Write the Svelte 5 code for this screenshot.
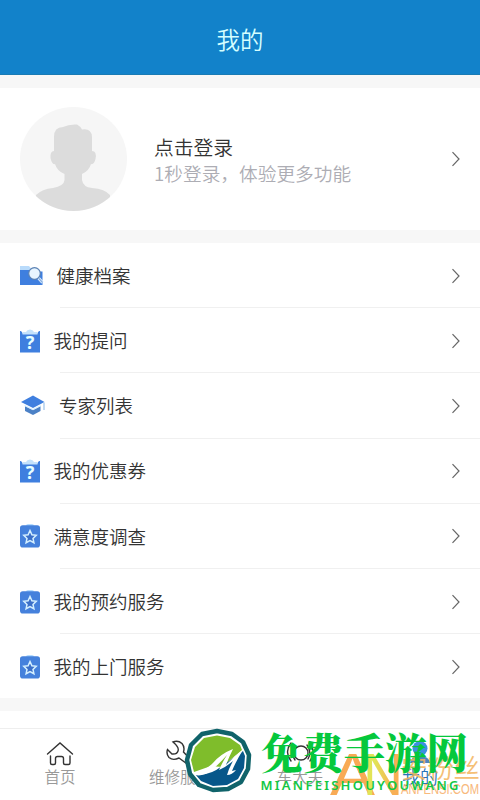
<script lang="ts">
	type Row = { label: string; icon: 'folder' | 'question' | 'cap' | 'star'; width: number; gap: number };

	// Menu entries, the icons differ in width
	const rows: Row[] = [
		{ label: '健康档案', icon: 'folder', width: 24, gap: 12.5 },
		{ label: '我的提问', icon: 'question', width: 20, gap: 13.5 },
		{ label: '专家列表', icon: 'cap', width: 26, gap: 13 },
		{ label: '我的优惠券', icon: 'question', width: 20, gap: 13.5 },
		{ label: '满意度调查', icon: 'star', width: 20, gap: 13.5 },
		{ label: '我的预约服务', icon: 'star', width: 20, gap: 13.5 },
		{ label: '我的上门服务', icon: 'star', width: 20, gap: 13.5 }
	];

	const tabs = [
		{ label: '首页', icon: 'home' },
		{ label: '维修服务', icon: 'wrench' },
		{ label: '车大夫', icon: 'doctor' },
		{ label: '我的', icon: 'user' }
	];

	let active = $state(3);
</script>

{#snippet chevron()}
	<svg class="chevron" width="10" height="16" viewBox="0 0 10 16">
		<path d="M1.500 1.200 L8 8 L1.500 14.800" fill="none" stroke="#666" stroke-width="1.200" />
	</svg>
{/snippet}

<div class="screen">
	<header>我的</header>

	<section class="profile">
		<svg class="avatar" width="107" height="104" viewBox="0 0 107 104">
			<defs>
				<clipPath id="face"><ellipse cx="53.500" cy="52" rx="53.500" ry="52" /></clipPath>
			</defs>
			<ellipse cx="53.500" cy="52" rx="53.500" ry="52" fill="#f6f6f6" />
			<path
				clip-path="url(#face)"
				fill="#dcdcdc"
				d="M34 44 V30 Q34 20 43 20 Q49 17 57 17.500 Q60 19 62 22.500 Q71.500 21 72 30 V44 Q77 44 75.500 52 Q74 58 71 57 Q69 64 62 67 V73 Q63 80 72 81 Q85 82 90 88 V104 H16 V88 Q22 82 33 81 Q44 79 44.500 73 V67 Q37 64 35 57 Q32 58 30.500 51 Q30 44 34 44Z"
			/>
		</svg>
		<div class="login">
			<div class="name">点击登录</div>
			<div class="hint">1秒登录，体验更多功能</div>
		</div>
		{@render chevron()}
	</section>

	<section class="menu">
		{#each rows as row}
			<div class="row">
				<svg width={row.width} height="24" viewBox="0 0 {row.width} 24">
					{#if row.icon === 'folder'}
						<g transform="translate(0 -.5)">
							<path d="M0 2.500 H9 L11 5 V8 H0Z" fill="#b9dbfb" />
							<path d="M0 6.500 H9 L12 8 H22.500 V21.500 H0Z" fill="#3f7fdf" />
							<path d="M18.500 14.500 L22.500 19" stroke="#e4f2ff" stroke-width="3" />
							<circle cx="14.500" cy="10" r="5.800" fill="#e8f5ff" stroke="#5b82b4" stroke-width="1.200" />
							<path d="M18.500 14.500 L22.500 19" stroke="#86aee0" stroke-width="1.200" />
						</g>
					{:else if row.icon === 'question'}
						<g transform="translate(0 -.5)">
							<path d="M0 2.500 Q2 2 2.500 5 H17.500 Q18 2 20 2.500 V24 H0Z" fill="#3f7fdf" />
							<path d="M2.500 6 V3.500 H6 Q7 1 10 1 T14 3.500 H17.500 V6Z" fill="#c5e2fb" />
							<text x="10" y="20" text-anchor="middle" class="mark">?</text>
						</g>
					{:else if row.icon === 'cap'}
						<path d="M5 12 L13 16 L20.500 12 V17 L13 21 L5 17Z" fill="#4c81c6" />
						<path d="M1 8 L13 1.500 L24.500 8 L13 14Z" fill="#3f7fdf" />
						<path d="M4.500 11.500 L13 15.500 L21 11.500" fill="none" stroke="#d8efff" stroke-width="1.200" />
						<path d="M24 8.500 V16" stroke="#a9cbed" stroke-width="1.400" />
					{:else}
						<rect x="6" y="0" width="8" height="4" rx="2" fill="#b5dcff" />
						<rect y="1.200" width="20" height="22.300" rx="2.800" fill="#4581dc" />
						<path
							d="M10 6.500 L11.900 10.800 L16.200 11.300 L13 14.400 L13.900 18.700 L10 16.500 L6.100 18.700 L7 14.400 L3.800 11.300 L8.100 10.800Z"
							fill="#3c70c8"
							stroke="#d5f0ff"
							stroke-width="1.500"
						/>
					{/if}
				</svg>
				<span style:margin-left="{row.gap}px">{row.label}</span>
				{@render chevron()}
			</div>
		{/each}
	</section>

	<div class="blank"></div>

	<nav>
		{#each tabs as tab, i}
			<button class:active={active === i} onclick={() => (active = i)}>
				<svg width="30" height="28" viewBox="0 0 30 28" fill="none" stroke="#333" stroke-width="1.400" stroke-linecap="round">
					{#if tab.icon === 'home'}
						<path d="M2.500 15 L15 4 L27.500 15" />
						<path d="M5.500 17 V24 Q5.500 25.500 7 25.500 H9 Q10.500 25.500 10.500 24 V19.500 Q10.500 17.500 12.500 17.500 H16.500 Q18.500 17.500 18.500 19.500 V24 Q18.500 25.500 20 25.500 H23.500 Q25 25.500 25 24 V17" />
					{:else if tab.icon === 'wrench'}
						<path d="M8 3 Q13 1 17 4.500 Q20 8 18.500 13 L28 23 L25 27 L14 19 Q8 22 4 18.500 Q1 15 2.500 10.500 L7 15 Q12 15.500 13 12 Q14.500 8.500 8 3Z" />
					{:else if tab.icon === 'doctor'}
						<circle cx="16" cy="14" r="7" />
						<path d="M6 4 Q-1 13 6 22 M9 6 Q4 13 10 21 M24 4 Q32 13 25 22 M22 6 Q27 13 23 20" />
					{:else}
						<circle cx="15" cy="9.500" r="7.500" fill="#3c8fe0" stroke="none" />
						<path d="M5 24 Q6 17 15 17 T25 24Z" fill="#4f86bd" stroke="none" />
					{/if}
				</svg>
				<span>{tab.label}</span>
			</button>
		{/each}
	</nav>

	<!-- Site stamps laid over the tab bar -->
	<svg class="stamp" width="300" height="80" viewBox="180 720 300 80">
		<defs>
			<linearGradient id="en">
				<stop offset=".3" stop-color="#dde03a" />
				<stop offset=".75" stop-color="#f7a238" />
			</linearGradient>
		</defs>
		<g class="fans">
			<text x="330" y="795" font-size="59" textLength="45" lengthAdjust="spacingAndGlyphs" fill="#f79c38">A</text>
			<text x="363" y="795" font-size="59" textLength="40" lengthAdjust="spacingAndGlyphs" fill="url(#en)">N</text>
			<text x="401" y="778" font-size="26.500" textLength="79" class="fans-name" fill="#f4b45d">安粉丝</text>
			<text x="401" y="794" font-size="15" textLength="78" lengthAdjust="spacingAndGlyphs" fill="#f7ad65">ANFENSI.COM</text>
		</g>
		<path
			d="M217 731 L232 734 L243 742 L249 755 L248 769 L241 782 L228 789 L213 790 L199 785 L190 774 L187 760 L191 745 L202 734Z"
			fill="#fff"
			stroke="#10636a"
			stroke-width="4.500"
			stroke-linejoin="round"
		/>
		<path d="M217 735.500 L230 738 L240 745 L242 750 L222 767 L211 766 L194 772 L191 760 L195 747 L204 738Z" fill="#7fbd2b" />
		<path d="M195 774 Q208 777 222 766 L243 751 L245 756 L244 768 L238 779 L227 785 L213 786 L201 781Z" fill="#07578a" />
		<path
			d="M193 773 Q203 772 212 764 Q220 754 233 749 Q229 757 226 765 Q234 756 243 750 Q236 761 232 771 L236 770 Q232 775 227 775 Q229 768 233 761 Q226 767 219 770 Q222 763 227 755 Q220 763 212 770 Q203 777 195 775Z"
			fill="#fff"
		/>
		<text x="261" y="768.500" font-size="42" textLength="207" lengthAdjust="spacingAndGlyphs" class="game">免费手游网</text>
		<text x="260.500" y="790" font-size="13" textLength="198" class="latin">MIANFEISHOUYOUWANG</text>
	</svg>
</div>

<style>
	:global(body) {
		margin: 0;
	}

	.screen {
		position: relative;
		display: flex;
		flex-direction: column;
		width: 480px;
		height: 800px;
		overflow: hidden;
		background: #f7f7f7;
		color: #333;
		font-family: 'Noto Sans CJK SC', sans-serif;
		font-weight: 350;
	}

	header {
		flex: none;
		height: 75px;
		margin-bottom: 13px;
		padding-top: 4px;
		box-sizing: border-box;
		background: #1282ca;
		border-bottom: 1px solid #197bb4;
		color: #d5ffff;
		font-size: 23.5px;
		line-height: 70px;
		text-align: center;
	}

	.profile {
		flex: none;
		display: flex;
		align-items: center;
		height: 142px;
		margin-bottom: 13px;
		padding: 0 19px 0 20px;
		box-sizing: border-box;
		background: #fff;
	}

	.login {
		margin-left: 27px;
	}

	.name {
		font-size: 19.8px;
		line-height: 26px;
	}

	.hint {
		color: #adadb4;
		font-size: 18.7px;
		line-height: 25px;
	}

	.chevron {
		flex: none;
		margin-left: auto;
	}

	.menu {
		flex: none;
		height: 455px;
		margin-bottom: 13px;
		background: #fff;
	}

	.row {
		display: flex;
		align-items: center;
		height: 65.2px;
		padding: 0 19px 0 20px;
		font-size: 18.5px;
		background: linear-gradient(#f0f0f0, #f0f0f0) 60px 100% / 420px 1px no-repeat;
	}

	.row span {
		padding-bottom: 1.5px;
	}

	.row:last-child {
		background: none;
	}

	.mark {
		fill: #e8ffff;
		font: bold 18px 'Noto Sans', sans-serif;
	}

	.blank {
		flex: none;
		height: 17px;
		background: #fff;
	}

	nav {
		flex: 1;
		display: flex;
		background: #fff;
		border-top: 1px solid #eee;
	}

	button {
		flex: 1;
		display: flex;
		flex-direction: column;
		align-items: center;
		padding: 10px 0 0;
		border: 0;
		background: none;
		color: #999;
		font: 350 15.5px/18px 'Noto Sans CJK SC', sans-serif;
	}

	button.active {
		color: #2873b9;
		font-size: 18px;
	}

	.stamp {
		position: absolute;
		right: 0;
		bottom: 0;
		pointer-events: none;
	}

	.fans {
		font-family: 'Liberation Sans', sans-serif;
		opacity: 0.85;
	}

	.fans-name {
		font-family: 'Noto Sans CJK SC', sans-serif;
	}

	.game {
		fill: #05c83c;
		font-family: 'Noto Serif CJK SC', 'Noto Sans CJK SC', serif;
		font-weight: 900;
	}

	.latin {
		fill: #13c744;
		font-family: 'Noto Sans', sans-serif;
		font-weight: 600;
	}
</style>
